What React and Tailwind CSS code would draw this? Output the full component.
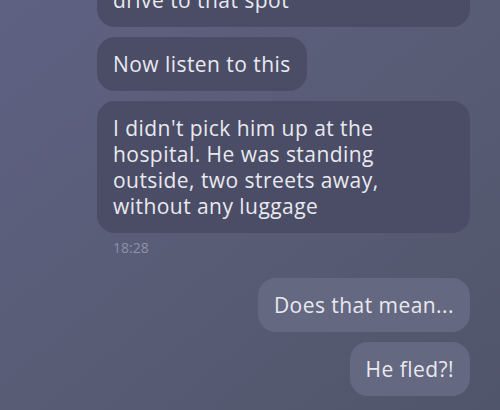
import React from "react";

// 채팅 화면 일부: 받은 메시지(왼쪽, 어두운 말풍선)와 보낸 메시지(오른쪽, 밝은 말풍선)

const incoming = "self-start rounded-[18px] bg-[#4a4d65] px-4 py-[14px] text-[21px] leading-[26px] text-[#e9e9f0]";
const outgoing = "self-end rounded-[18px] bg-[#656881] px-4 py-[14px] text-[21px] leading-[26px] text-[#e9e9f0]";

export default function App() {
  return (
    <div className="h-[410px] w-[500px] overflow-hidden bg-gradient-to-br from-[#5f6183] via-[#585c75] to-[#51556b] font-['Open_Sans',sans-serif]">
      <div className="-mt-[27px] flex flex-col gap-[10px] pl-[97px] pr-[30px]">
        <div className={`${incoming} w-[373px]`}>
          <span className="block whitespace-nowrap tracking-[0.45px]">drive to that spot</span>
        </div>

        <div className={incoming}>
          <span className="block whitespace-nowrap tracking-[0.45px]">Now listen to this</span>
        </div>

        <div className="flex flex-col">
          <div className={`${incoming} w-[373px]`}>
            <span className="block whitespace-nowrap tracking-[0.45px]">I didn't pick him up at the</span>
            <span className="block whitespace-nowrap tracking-[0.45px]">hospital. He was standing</span>
            <span className="block whitespace-nowrap tracking-[0.45px]">outside, two streets away,</span>
            <span className="block whitespace-nowrap tracking-[0.45px]">without any luggage</span>
          </div>
          <span className="mt-[7px] pl-4 text-[14px] leading-4 text-[#8e91a8]">18:28</span>
        </div>

        <div className={`${outgoing} mt-[12px]`}>
          <span className="block whitespace-nowrap tracking-[0.45px]">Does that mean...</span>
        </div>

        <div className={outgoing}>
          <span className="block whitespace-nowrap tracking-[0.45px]">He fled?!</span>
        </div>
      </div>
    </div>
  );
}
